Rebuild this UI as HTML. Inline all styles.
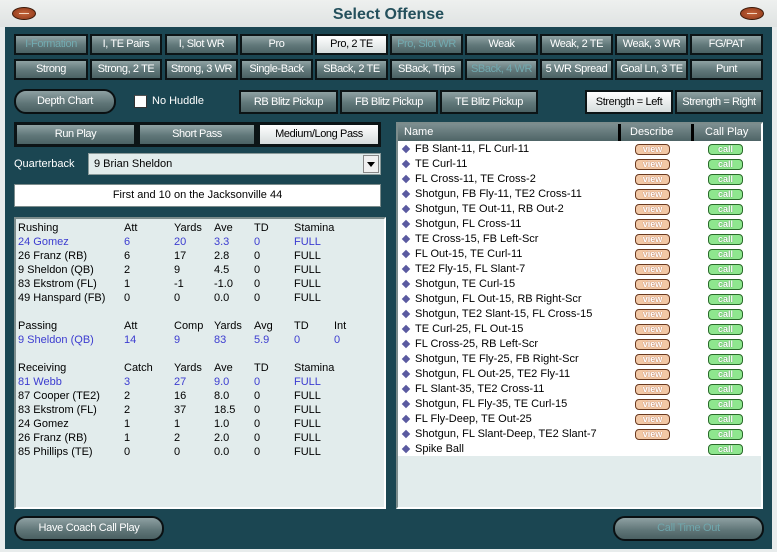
<!DOCTYPE html>
<html><head><meta charset="utf-8"><style>
*{box-sizing:border-box;margin:0;padding:0}
body{width:777px;height:552px;overflow:hidden;background:#e8ecec;font-family:"Liberation Sans",sans-serif;font-size:11px;position:relative}
.a{position:absolute}
#hdr{left:0;top:0;width:777px;height:27px;background:linear-gradient(#eef0ef,#dfe3e2)}
#title{left:0;top:6px;width:777px;text-align:center;font-size:16px;font-weight:bold;color:#24505c}
.ball{width:24px;height:13px;border-radius:50%;background:radial-gradient(#c6663c,#8a3416);border:1px solid #3a1a0a}
.ball:after{content:"";position:absolute;left:6px;top:5px;width:10px;height:1px;background:#f4d6c0}
#panel{left:5px;top:27px;width:767px;height:522px;background:#1b4652}
.b{position:absolute;height:21px;border:2px solid #0c1416;background:linear-gradient(#8fa2a3,#607779 55%,#4b6264);color:#fff;text-align:center;line-height:17px;font-size:11px;letter-spacing:-0.4px;white-space:nowrap;overflow:hidden}
.b.s{background:linear-gradient(#fff,#d6dcdc);color:#000}
.b.d{color:#72aab0}
.pill{position:absolute;height:25px;border:2px solid #0a1012;border-radius:12px;background:linear-gradient(#8ea0a2,#5e7476 60%,#4a6062);color:#fff;text-align:center;line-height:21px;font-size:11px;letter-spacing:-0.3px}
.box{position:absolute;background:#e2ecec;border:2px solid #fff;border-top-color:#7c8c8c;border-left-color:#7c8c8c}
.st{position:absolute;font-size:11px;line-height:14px;white-space:nowrap}
.bl{color:#3c3cd0}
.row{position:absolute;left:0;width:362px;height:15px;font-size:11px;line-height:15px}
.row i{position:absolute;left:5px;top:4px;width:6px;height:6px;background:#5a5aa0;transform:rotate(45deg)}
.row span{position:absolute;left:17px}
.v{position:absolute;left:237px;top:2px;width:35px;height:11px;border:1px solid #6a3a20;border-radius:4px;background:#f2c8a6;color:#fff;font-size:9px;line-height:9px;text-align:center;text-shadow:0 0 1px #a05030}
.c{position:absolute;left:310px;top:2px;width:35px;height:11px;border:1px solid #2a6a2a;border-radius:4px;background:#8ee68e;color:#fff;font-size:9px;line-height:9px;text-align:center;text-shadow:0 0 1px #307030}
</style></head><body>
<div class="a" id="hdr"></div>
<div class="a" id="title">Select Offense</div>
<div class="a ball" style="left:12px;top:7px"></div>
<div class="a ball" style="left:740px;top:7px"></div>
<div class="a" id="panel"></div>

<div class="b d" style="left:14px;top:34px;width:74px">I-Formation</div>
<div class="b" style="left:90px;top:34px;width:72px">I, TE Pairs</div>
<div class="b" style="left:165px;top:34px;width:73px">I, Slot WR</div>
<div class="b" style="left:240px;top:34px;width:73px">Pro</div>
<div class="b s" style="left:315px;top:34px;width:73px">Pro, 2 TE</div>
<div class="b d" style="left:390px;top:34px;width:73px">Pro, Slot WR</div>
<div class="b" style="left:465px;top:34px;width:73px">Weak</div>
<div class="b" style="left:540px;top:34px;width:73px">Weak, 2 TE</div>
<div class="b" style="left:615px;top:34px;width:73px">Weak, 3 WR</div>
<div class="b" style="left:690px;top:34px;width:73px">FG/PAT</div>

<div class="b" style="left:14px;top:59px;width:74px">Strong</div>
<div class="b" style="left:90px;top:59px;width:72px">Strong, 2 TE</div>
<div class="b" style="left:165px;top:59px;width:73px">Strong, 3 WR</div>
<div class="b" style="left:240px;top:59px;width:73px">Single-Back</div>
<div class="b" style="left:315px;top:59px;width:73px">SBack, 2 TE</div>
<div class="b" style="left:390px;top:59px;width:73px">SBack, Trips</div>
<div class="b d" style="left:465px;top:59px;width:73px">SBack, 4 WR</div>
<div class="b" style="left:540px;top:59px;width:73px">5 WR Spread</div>
<div class="b" style="left:615px;top:59px;width:73px">Goal Ln, 3 TE</div>
<div class="b" style="left:690px;top:59px;width:73px">Punt</div>

<div class="pill" style="left:14px;top:89px;width:102px">Depth Chart</div>
<div class="a" style="left:134px;top:95px;width:13px;height:13px;background:#fff;border:1px solid #333;border-top-color:#555"></div>
<div class="a" style="left:152px;top:95px;color:#fff;font-size:11px">No Huddle</div>
<div class="b" style="left:239px;top:90px;width:99px;height:24px;line-height:20px">RB Blitz Pickup</div>
<div class="b" style="left:340px;top:90px;width:98px;height:24px;line-height:20px">FB Blitz Pickup</div>
<div class="b" style="left:440px;top:90px;width:98px;height:24px;line-height:20px">TE Blitz Pickup</div>
<div class="b s" style="left:585px;top:90px;width:88px;height:24px;line-height:20px">Strength = Left</div>
<div class="b" style="left:675px;top:90px;width:88px;height:24px;line-height:20px">Strength = Right</div>

<div class="a" style="left:14px;top:122px;width:367px;height:25px;background:#0c1416"></div>
<div class="b" style="left:15px;top:123px;width:121px;height:23px;line-height:19px">Run Play</div>
<div class="b" style="left:138px;top:123px;width:118px;height:23px;line-height:19px">Short Pass</div>
<div class="b s" style="left:258px;top:123px;width:122px;height:23px;line-height:19px">Medium/Long Pass</div>

<div class="a" style="left:14px;top:158px;color:#fff;font-size:11px">Quarterback</div>
<div class="a" style="left:88px;top:153px;width:293px;height:22px;background:#e2ecec;border:1px solid #8a9a9a;padding:4px 5px;font-size:11px">9 Brian Sheldon</div>
<div class="a" style="left:363px;top:155px;width:16px;height:18px;background:#f0f0f0;border:1px solid #888"><div class="a" style="left:3px;top:6px;border-left:4px solid transparent;border-right:4px solid transparent;border-top:5px solid #000"></div></div>

<div class="a" style="left:14px;top:184px;width:367px;height:23px;background:#fff;border:1px solid #7c8c8c;text-align:center;line-height:21px;font-size:11px">First and 10 on the Jacksonville 44</div>

<div class="box" style="left:14px;top:217px;width:372px;height:292px"></div>
<div class="st" style="left:18px;top:221px">Rushing<br><span class="bl">24 Gomez</span><br>26 Franz (RB)<br>9 Sheldon (QB)<br>83 Ekstrom (FL)<br>49 Hanspard (FB)<br><br>Passing<br><span class="bl">9 Sheldon (QB)</span><br><br>Receiving<br><span class="bl">81 Webb</span><br>87 Cooper (TE2)<br>83 Ekstrom (FL)<br>24 Gomez<br>26 Franz (RB)<br>85 Phillips (TE)</div>
<div class="st" style="left:124px;top:221px">Att<br><span class="bl">6</span><br>6<br>2<br>1<br>0<br><br>Att<br><span class="bl">14</span><br><br>Catch<br><span class="bl">3</span><br>2<br>2<br>1<br>1<br>0</div>
<div class="st" style="left:174px;top:221px">Yards<br><span class="bl">20</span><br>17<br>9<br>-1<br>0<br><br>Comp<br><span class="bl">9</span><br><br>Yards<br><span class="bl">27</span><br>16<br>37<br>1<br>2<br>0</div>
<div class="st" style="left:214px;top:221px">Ave<br><span class="bl">3.3</span><br>2.8<br>4.5<br>-1.0<br>0.0<br><br>Yards<br><span class="bl">83</span><br><br>Ave<br><span class="bl">9.0</span><br>8.0<br>18.5<br>1.0<br>2.0<br>0.0</div>
<div class="st" style="left:254px;top:221px">TD<br><span class="bl">0</span><br>0<br>0<br>0<br>0<br><br>Avg<br><span class="bl">5.9</span><br><br>TD<br><span class="bl">0</span><br>0<br>0<br>0<br>0<br>0</div>
<div class="st" style="left:294px;top:221px">Stamina<br><span class="bl">FULL</span><br>FULL<br>FULL<br>FULL<br>FULL<br><br>TD<br><span class="bl">0</span><br><br>Stamina<br><span class="bl">FULL</span><br>FULL<br>FULL<br>FULL<br>FULL<br>FULL</div>
<div class="st" style="left:334px;top:319px">Int<br><span class="bl">0</span></div>

<div class="box" style="left:396px;top:122px;width:367px;height:387px">
<div class="a" style="left:0;top:0;width:363px;height:17px;background:linear-gradient(#7c8e90,#4e6466);color:#fff;font-size:11px;line-height:17px">
<span class="a" style="left:6px">Name</span>
<div class="a" style="left:220px;top:0;width:3px;height:17px;background:#000"></div>
<span class="a" style="left:232px">Describe</span>
<div class="a" style="left:293px;top:0;width:3px;height:17px;background:#000"></div>
<span class="a" style="left:307px">Call Play</span></div>
<div class="a" style="left:0;top:17px;width:363px;height:315px;background:#fff">
<div class="row" style="top:1px"><i></i><span>FB Slant-11, FL Curl-11</span><b class="v">view</b><b class="c">call</b></div>
<div class="row" style="top:16px"><i></i><span>TE Curl-11</span><b class="v">view</b><b class="c">call</b></div>
<div class="row" style="top:31px"><i></i><span>FL Cross-11, TE Cross-2</span><b class="v">view</b><b class="c">call</b></div>
<div class="row" style="top:46px"><i></i><span>Shotgun, FB Fly-11, TE2 Cross-11</span><b class="v">view</b><b class="c">call</b></div>
<div class="row" style="top:61px"><i></i><span>Shotgun, TE Out-11, RB Out-2</span><b class="v">view</b><b class="c">call</b></div>
<div class="row" style="top:76px"><i></i><span>Shotgun, FL Cross-11</span><b class="v">view</b><b class="c">call</b></div>
<div class="row" style="top:91px"><i></i><span>TE Cross-15, FB Left-Scr</span><b class="v">view</b><b class="c">call</b></div>
<div class="row" style="top:106px"><i></i><span>FL Out-15, TE Curl-11</span><b class="v">view</b><b class="c">call</b></div>
<div class="row" style="top:121px"><i></i><span>TE2 Fly-15, FL Slant-7</span><b class="v">view</b><b class="c">call</b></div>
<div class="row" style="top:136px"><i></i><span>Shotgun, TE Curl-15</span><b class="v">view</b><b class="c">call</b></div>
<div class="row" style="top:151px"><i></i><span>Shotgun, FL Out-15, RB Right-Scr</span><b class="v">view</b><b class="c">call</b></div>
<div class="row" style="top:166px"><i></i><span>Shotgun, TE2 Slant-15, FL Cross-15</span><b class="v">view</b><b class="c">call</b></div>
<div class="row" style="top:181px"><i></i><span>TE Curl-25, FL Out-15</span><b class="v">view</b><b class="c">call</b></div>
<div class="row" style="top:196px"><i></i><span>FL Cross-25, RB Left-Scr</span><b class="v">view</b><b class="c">call</b></div>
<div class="row" style="top:211px"><i></i><span>Shotgun, TE Fly-25, FB Right-Scr</span><b class="v">view</b><b class="c">call</b></div>
<div class="row" style="top:226px"><i></i><span>Shotgun, FL Out-25, TE2 Fly-11</span><b class="v">view</b><b class="c">call</b></div>
<div class="row" style="top:241px"><i></i><span>FL Slant-35, TE2 Cross-11</span><b class="v">view</b><b class="c">call</b></div>
<div class="row" style="top:256px"><i></i><span>Shotgun, FL Fly-35, TE Curl-15</span><b class="v">view</b><b class="c">call</b></div>
<div class="row" style="top:271px"><i></i><span>FL Fly-Deep, TE Out-25</span><b class="v">view</b><b class="c">call</b></div>
<div class="row" style="top:286px"><i></i><span>Shotgun, FL Slant-Deep, TE2 Slant-7</span><b class="v">view</b><b class="c">call</b></div>
<div class="row" style="top:301px"><i></i><span>Spike Ball</span><b class="c">call</b></div>
</div></div>

<div class="pill" style="left:14px;top:516px;width:150px">Have Coach Call Play</div>
<div class="pill" style="left:613px;top:516px;width:151px;color:#6fa6ac">Call Time Out</div>
</body></html>
